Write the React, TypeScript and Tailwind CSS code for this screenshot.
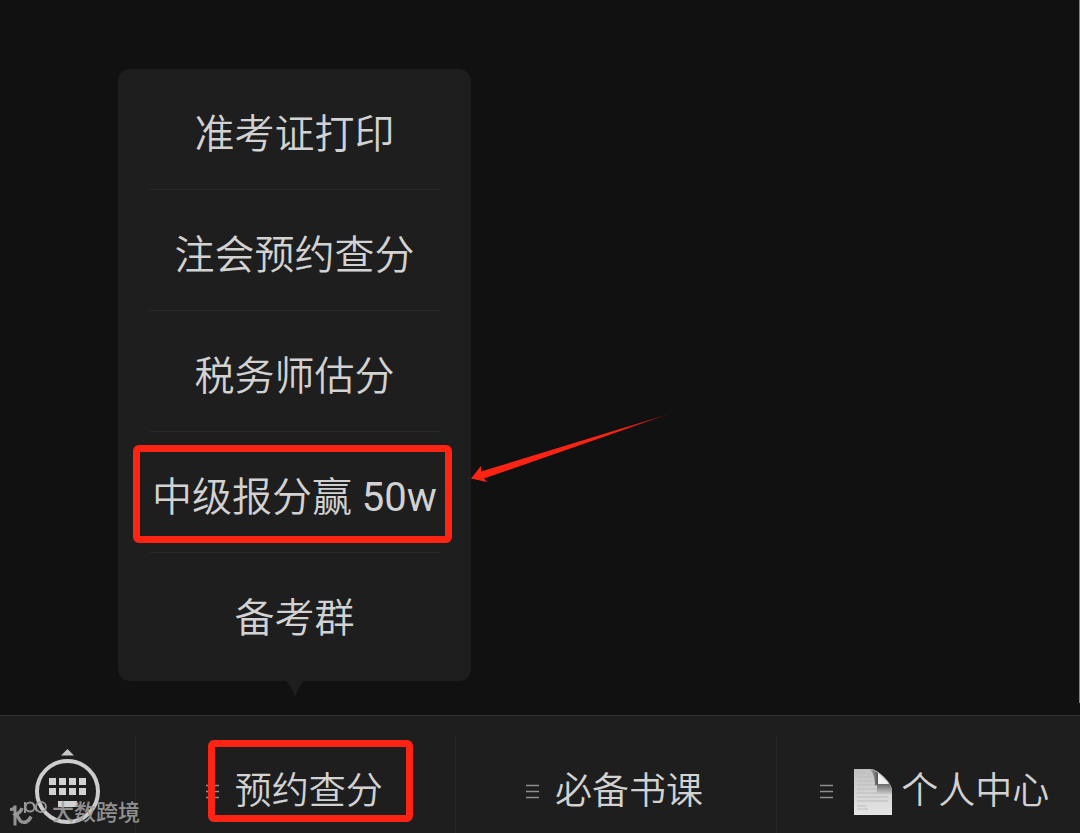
import type { ReactNode } from "react";

interface MenuItem {
  id: number;
  label: ReactNode;
  highlighted?: boolean;
}

const menuItems: MenuItem[] = [
  { id: 1, label: "准考证打印" },
  { id: 2, label: "注会预约查分" },
  { id: 3, label: "税务师估分" },
  { id: 4, label: <>中级报分赢 <span className="font-normal">50w</span></>, highlighted: true },
  { id: 5, label: "备考群" },
];

const ListIcon = () => (
  <svg className="w-[13px] h-4 shrink-0" viewBox="0 0 13 16" aria-hidden="true">
    <path d="M0 1.5h13M0 7.500h13M0 13.500h13" stroke="#8f8f8f" strokeWidth="1.5" />
  </svg>
);

const KeyboardIcon = () => (
  <svg className="w-[66px] h-[77px]" viewBox="0 0 66 77" aria-hidden="true">
    <path d="M32.500 1l6.500 6.500H26z" fill="#c8c8c8" />
    <circle cx="32.500" cy="43.500" r="30.500" fill="none" stroke="#cdcdcd" strokeWidth="4" />
    <g fill="#d2d2d2">
      {[14, 24, 34, 44].map((x) => (
        <g key={x}>
          <rect x={x} y="30" width="7" height="7" />
          <rect x={x} y="40" width="7" height="7" />
        </g>
      ))}
      <rect x="23" y="53" width="19" height="6" />
    </g>
  </svg>
);

const PageIcon = () => (
  <svg className="w-10 h-[46px] shrink-0" viewBox="0 0 40 46" aria-hidden="true">
    <defs>
      <linearGradient id="sheet" x1="0" y1="0" x2="0" y2="1">
        <stop offset="0" stopColor="#c0c0c0" />
        <stop offset="1" stopColor="#e6e6e6" />
      </linearGradient>
      <linearGradient id="shade" x1="0" y1="0" x2="0" y2="1">
        <stop offset="0" stopColor="#606060" />
        <stop offset="1" stopColor="#c9c9c9" />
      </linearGradient>
      <linearGradient id="fold" x1="0" y1="0" x2="1" y2="0">
        <stop offset="0" stopColor="#c0c0c0" />
        <stop offset="1" stopColor="#505050" />
      </linearGradient>
    </defs>
    <path d="M1 0h18c7 2 18 12 20 20v26H1z" fill="url(#sheet)" />
    <path
      d="M4 4h8M4 8h16M4 12h18M4 16h18M4 20h20M4 24h22M4 28h31M4 32h31M4 37h10M4 40h11"
      stroke="#bcbcbc"
      strokeWidth="1"
    />
    <path d="M24 14h12l3 6v5H24z" fill="url(#shade)" />
    <path d="M16 0h3l6 4v11l-3 2c0-7-1-13-6-17z" fill="url(#fold)" />
    <path d="M25 4v11h11z" fill="#f0f0f0" />
  </svg>
);

const Arrow = () => (
  <svg className="absolute left-[352px] top-[344px] w-[200px] h-[72px]" viewBox="0 0 200 72" aria-hidden="true">
    <defs>
      <linearGradient id="tail" x1="0" y1="0" x2="1" y2="0">
        <stop offset="0.75" stopColor="#ff2314" />
        <stop offset="1" stopColor="#ff2314" stopOpacity="0.5" />
      </linearGradient>
    </defs>
    <path d="M1 65.500L11 53L11 58.500L199 1L14 65.500L17 69z" fill="url(#tail)" />
  </svg>
);

const Watermark = () => (
  <div className="absolute left-2 bottom-1.5 flex items-center gap-1 text-[#a0a0a0]/90">
    <svg className="w-10 h-7" viewBox="0 0 40 28" fill="none" stroke="currentColor" aria-hidden="true">
      <path d="M2 10.500c3 0 5-1 5-4v20" strokeWidth="3" />
      <path d="M14 9c-1 4-3 5-6 6.500 2 1 2 4 5 7 4 2 8 0 10-5" strokeWidth="3.500" />
      <path d="M17 3v11" strokeWidth="2" />
      <circle cx="22" cy="8" r="4.500" strokeWidth="2" />
      <circle cx="33" cy="8" r="5" strokeWidth="2" />
      <path d="M25 5c2 2 2 5 4 7" strokeWidth="2" />
    </svg>
    <span className="text-[22px] leading-6 font-medium">大数跨境</span>
  </div>
);

const App: React.FC = () => {
  return (
    <div className="min-h-screen flex flex-col overflow-hidden bg-[#111111] text-[#d2d2d2] font-['Roboto','Noto_Sans_CJK_SC',sans-serif] font-[350]">
      <main className="flex-1 flex flex-col pb-3">
        <div className="flex-1 flex items-end border-r border-[#858585] pl-[118px] pb-[22px]">
          {/* Popup menu */}
          <div className="relative w-[353px] rounded-xl bg-[#1e1e1e] pb-2">
            <ul>
              {menuItems.map((item, index) => (
                <li key={item.id} className="relative">
                  <button className="w-full h-[120px] pt-3 text-[40px] leading-none whitespace-nowrap">
                    {item.label}
                  </button>
                  {index < menuItems.length - 1 && <div className="h-px mx-8 bg-[#2a2a2a]" />}
                  {item.highlighted && (
                    <div className="absolute left-[15px] right-[19px] top-[13px] bottom-[10px] border-7 border-[#ff2314] rounded-md pointer-events-none" />
                  )}
                </li>
              ))}
            </ul>
            <svg className="absolute top-full left-1/2 -translate-x-1/2 w-5 h-4" viewBox="0 0 20 16" aria-hidden="true">
              <path d="M0 0h20c-4 2-8 10-10 16C8 10 4 2 0 0z" fill="#1e1e1e" />
            </svg>
            <Arrow />
          </div>
        </div>
      </main>

      {/* Bottom bar */}
      <nav className="relative flex h-[118px] -mr-4 border-t border-[#303030] bg-[#1e1e1e] text-[37px] leading-none whitespace-nowrap">
        <button className="w-[135px] pt-8 flex justify-center" aria-label="键盘">
          <KeyboardIcon />
        </button>
        <div className="relative flex-1 flex pt-5">
          <div className="w-px bg-[#282828]" />
          <button className="flex-1 flex items-center justify-center gap-4 pt-[14px] pr-[3px]">
            <ListIcon />
            预约查分
          </button>
          <div className="absolute left-[73px] right-[42px] top-6 h-[82px] border-7 border-[#ff2314] rounded-md pointer-events-none" />
        </div>
        <div className="flex-1 flex pt-5">
          <div className="w-px bg-[#282828]" />
          <button className="flex-1 flex items-center justify-center gap-4 pt-[14px] pr-[3px]">
            <ListIcon />
            必备书课
          </button>
        </div>
        <div className="flex-1 flex pt-5">
          <div className="w-px bg-[#282828]" />
          <button className="flex-1 flex items-center justify-center gap-5 pt-[14px] pr-[3px]">
            <ListIcon />
            <span className="flex items-center gap-2">
              <PageIcon />
              个人中心
            </span>
          </button>
        </div>
        <Watermark />
      </nav>
    </div>
  );
};

export default App;
